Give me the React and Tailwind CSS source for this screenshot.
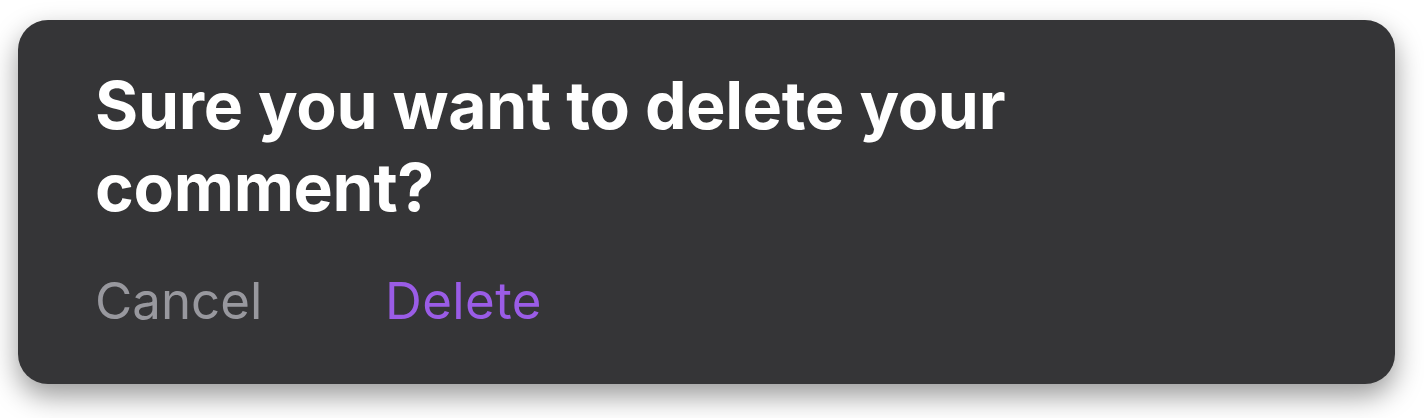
export default function App() {
  return (
    <div className="w-[1424px] h-[418px] bg-white pt-[20px] pl-[18px]" style={{ fontFamily: 'Inter, "Noto Sans", sans-serif' }}>
      <div className="w-[1377px] h-[364px] rounded-[30px] bg-[#353537] shadow-[0_12px_28px_rgba(0,0,0,0.4)] pl-[77px] pt-[44px]">
        <h1 className="text-white font-bold text-[66px] leading-[82px] w-[1000px] tracking-[-0.3px]">
          Sure you want to delete your comment?
        </h1>
        <div className="flex mt-[43px] text-[51px] leading-[60px]">
          <span className="text-[#98989e] w-[290px]">Cancel</span>
          <span className="text-[#9a5ce6] tracking-[0.4px]">Delete</span>
        </div>
      </div>
    </div>
  );
}
